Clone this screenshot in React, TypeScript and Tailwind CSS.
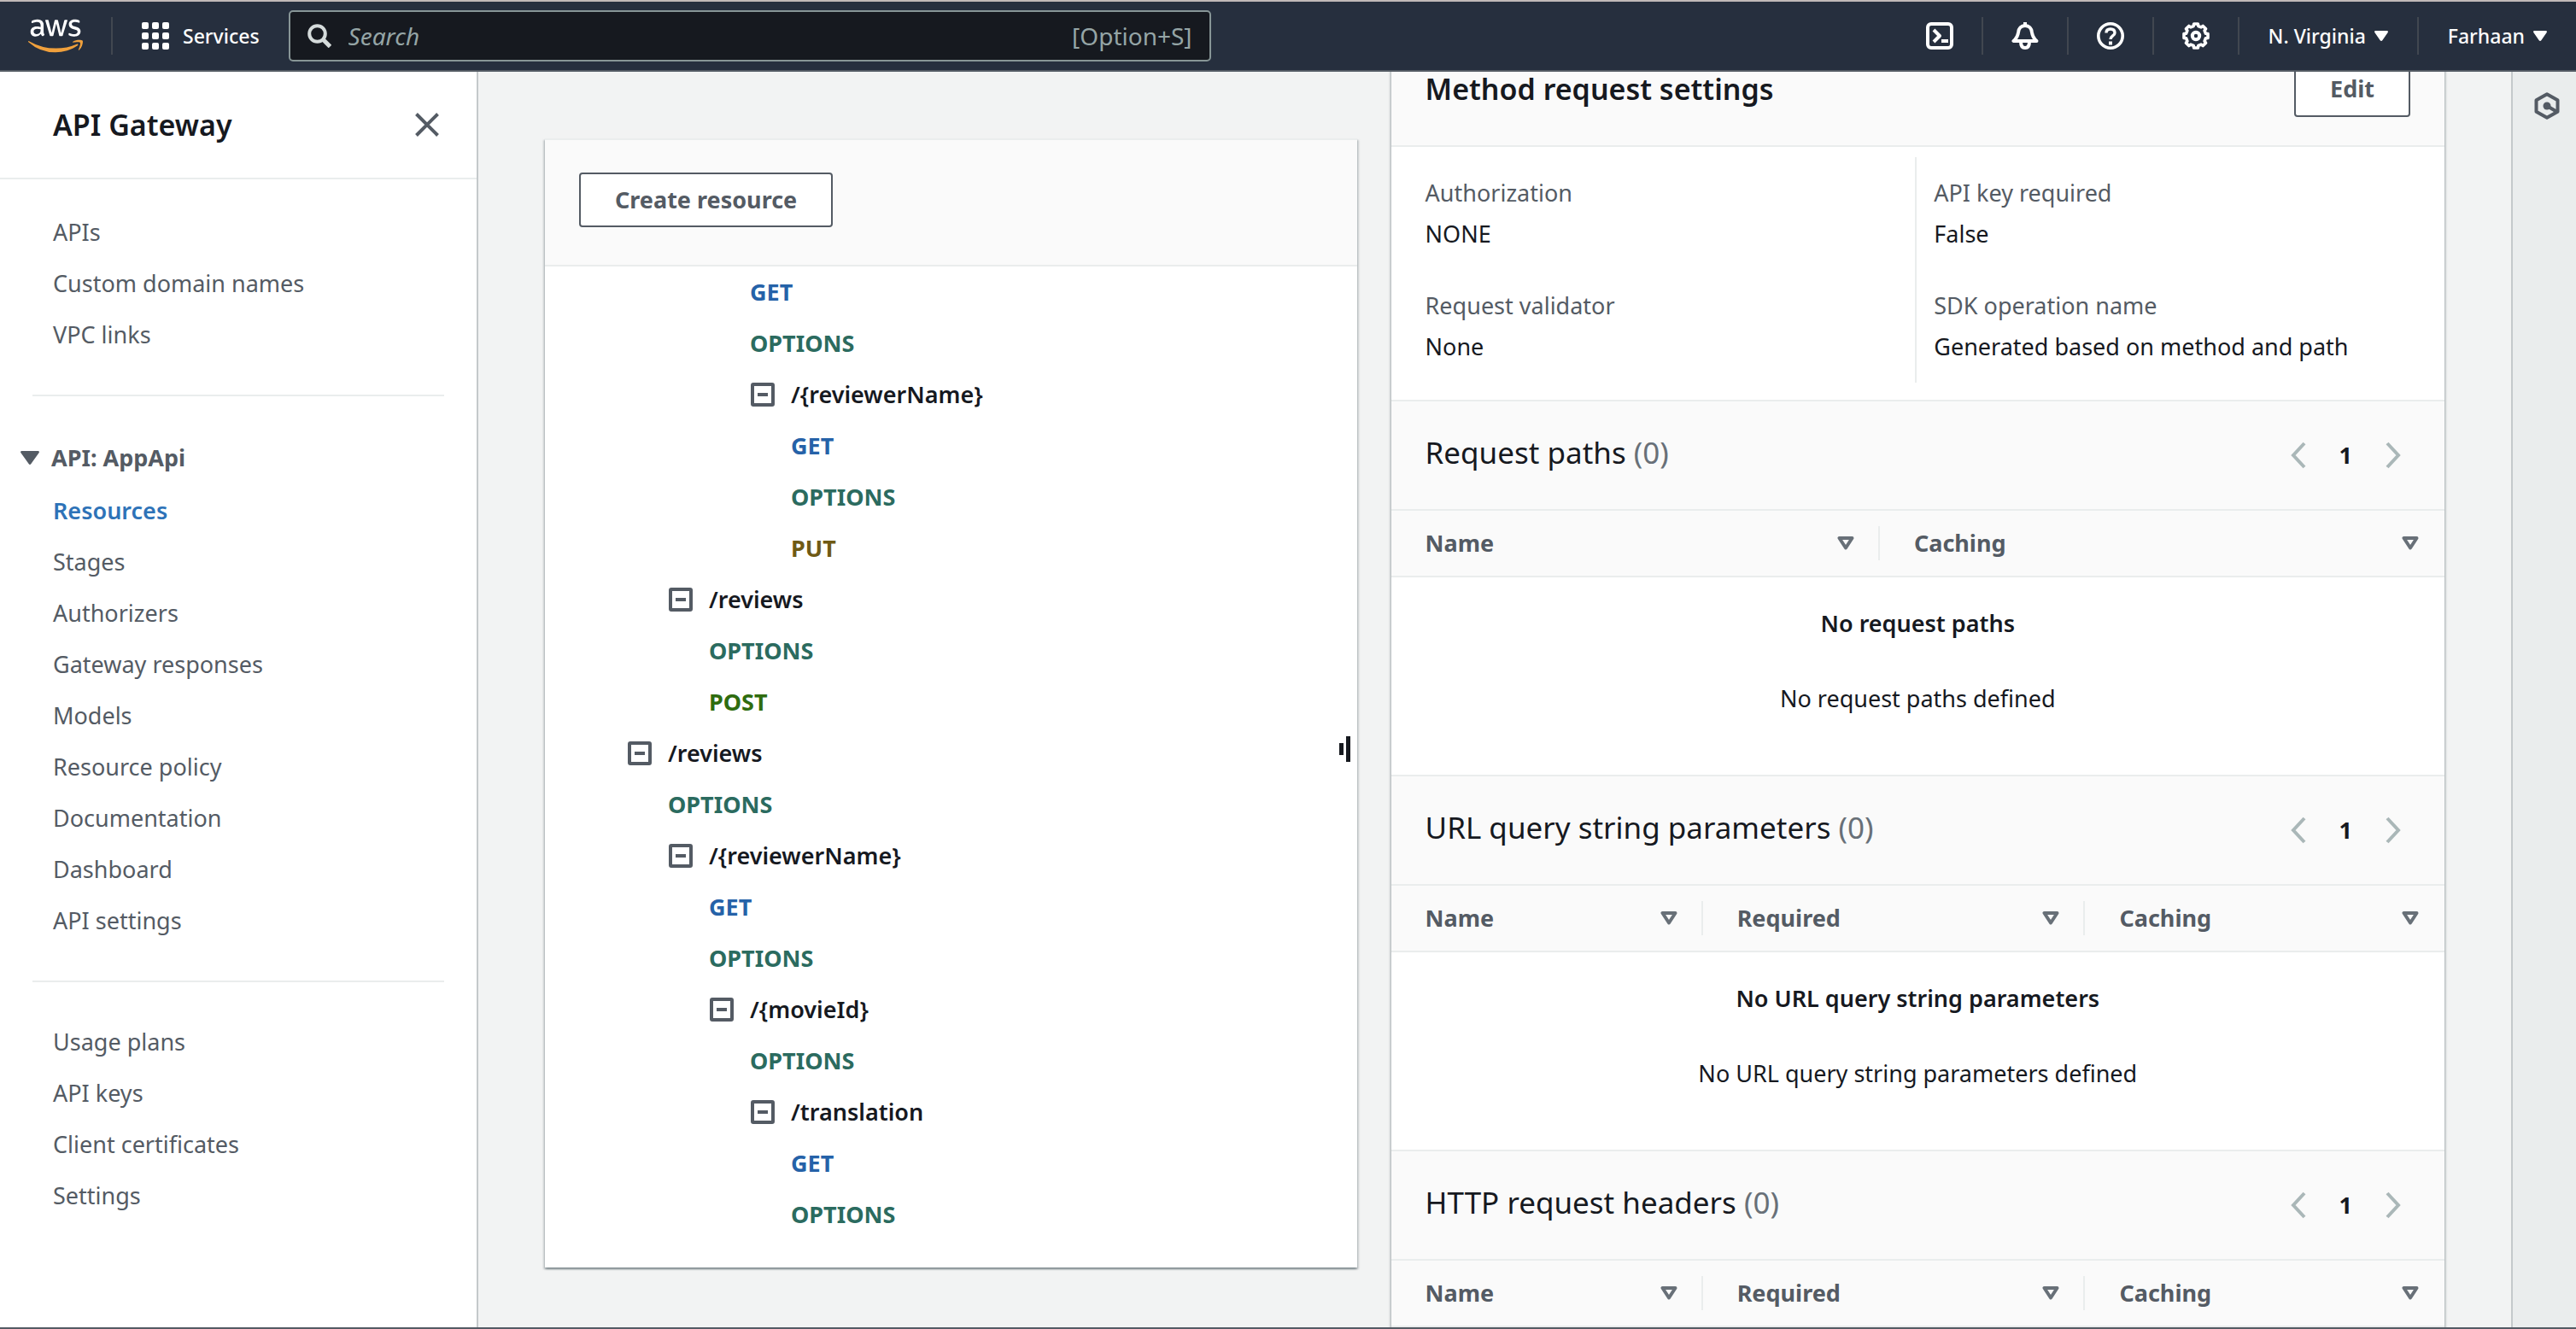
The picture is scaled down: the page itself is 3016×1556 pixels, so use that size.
import type { ReactNode } from "react";
import { FaAws } from "react-icons/fa";

const Divider = () => <span className="h-11 w-0.5 shrink-0 bg-[#414750]" />;

function AwsLogo() {
  return (
    <a href="#home" aria-label="AWS" className="relative block h-[52px] w-16 shrink-0">
      <FaAws className="h-full w-full text-white [clip-path:inset(0_0_42%_0)]" />
      <FaAws className="absolute inset-0 h-full w-full text-[#f0a03c] [clip-path:inset(58%_0_0_0)]" />
    </a>
  );
}

function GridIcon() {
  const steps = [0, 12, 24];
  return (
    <svg viewBox="0 0 32 32" className="size-8" fill="currentColor">
      {steps.map((y) => steps.map((x) => <rect key={`${x}-${y}`} x={x} y={y} width="8" height="8" rx="2" />))}
    </svg>
  );
}

function IconButton({ label, children }: { label: string; children: ReactNode }) {
  return (
    <button aria-label={label} className="flex h-full w-[98px] shrink-0 items-center justify-center">
      <svg viewBox="0 0 32 32" className="size-8" fill="none" stroke="currentColor" strokeWidth="4" strokeLinejoin="round">
        {children}
      </svg>
    </button>
  );
}

function GearShape() {
  const points: string[] = [];
  const teeth = 8;
  for (let i = 0; i < teeth; i++) {
    const base = (i / teeth) * Math.PI * 2 - Math.PI / 2;
    [
      [-0.24, 11.8],
      [-0.17, 14.2],
      [0.17, 14.2],
      [0.24, 11.8],
    ].forEach(([offset, radius]) => {
      points.push(`${(16 + radius * Math.cos(base + offset)).toFixed(2)},${(16 + radius * Math.sin(base + offset)).toFixed(2)}`);
    });
  }
  return <polygon points={points.join(" ")} strokeWidth="3.6" />;
}

function MenuButton({ label }: { label: string }) {
  return (
    <button className="flex h-full shrink-0 items-center gap-2.5 px-[34px] text-[23px] font-medium">
      {label}
      <svg viewBox="0 0 16 12" className="h-3 w-4" fill="currentColor">
        <path d="M1.4 0h13.2c1.1 0 1.7 1 1.1 1.9L9.300 11.300c-.6.9-2 .9-2.600 0L.3 1.900C-.3 1 .3 0 1.400 0z" />
      </svg>
    </button>
  );
}

function TopBar() {
  return (
    <header className="relative z-10 flex h-[84px] shrink-0 items-center border-t-2 border-b-2 border-t-[#c0b9b7] border-b-[#545b64] bg-[#262f3e] pl-[33px] text-white">
      <AwsLogo />
      <div className="flex items-center pl-[33px]">
        <Divider />
      </div>
      <button className="ml-[34px] flex items-center gap-4 text-[23px] font-medium">
        <GridIcon />
        Services
      </button>
      <label className="ml-[34px] flex h-[60px] w-[1080px] min-w-0 items-center rounded-[5px] border-2 border-[#879596] bg-[#16191f] px-5">
        <svg viewBox="0 0 28 28" className="size-7 shrink-0" fill="none" stroke="#d5dbdb" strokeWidth="4">
          <circle cx="11.500" cy="11.500" r="9.300" />
          <path d="M18 18l8.500 8.500" strokeWidth="5" />
        </svg>
        <input
          aria-label="Search"
          placeholder="Search"
          className="ml-5 min-w-0 flex-1 bg-transparent text-[28px] outline-none placeholder:text-[#95a5a6] placeholder:italic"
        />
        <span className="text-[28px] text-[#95a5a6]">[Option+S]</span>
      </label>
      <nav className="ml-auto flex h-full items-center">
        <IconButton label="CloudShell">
          <rect x="2" y="2" width="28" height="28" rx="4" />
          <path d="M9 9l7 7-7 7" />
          <path d="M18 22h8" />
        </IconButton>
        <Divider />
        <IconButton label="Notifications">
          <path d="M16 0v4" />
          <path d="M2.500 22h27c-4-3.500-5-6-5.500-10C23.500 7 20.500 4 16 4s-7.500 3-8 8c-.5 4-1.500 6.500-5.500 10z" />
          <path d="M11 23c0 4.500 2 7 5 7s5-2.500 5-7" />
        </IconButton>
        <Divider />
        <IconButton label="Help">
          <circle cx="16" cy="16" r="14.200" strokeWidth="3.600" />
          <path d="M11 12.500C11 9.500 13 8 16 8s5 1.700 5 4.500c0 3.500-5 3.500-5 7.500" strokeWidth="3.400" />
          <path d="M16 22.500v4" />
        </IconButton>
        <Divider />
        <IconButton label="Settings">
          <GearShape />
          <circle cx="16" cy="16" r="4.200" />
        </IconButton>
        <Divider />
        <MenuButton label="N. Virginia" />
        <Divider />
        <MenuButton label="Farhaan" />
      </nav>
    </header>
  );
}

function NavList({ items, active }: { items: string[]; active?: string }) {
  return (
    <ul>
      {items.map((item) => (
        <li key={item}>
          <a
            href="#nav"
            className={
              item === active
                ? "flex h-[60px] items-center font-semibold text-[#2e73b8]"
                : "flex h-[60px] items-center text-[#545b64]"
            }
          >
            {item}
          </a>
        </li>
      ))}
    </ul>
  );
}

function Sidebar() {
  return (
    <aside className="z-[1] flex w-[560px] shrink-0 flex-col border-r-2 border-[#c4c9cb] bg-white">
      <div className="flex h-[126px] shrink-0 items-center justify-between border-b-2 border-[#eaeded] pr-11 pl-[62px]">
        <h2 className="text-[34px] font-semibold">API Gateway</h2>
        <button aria-label="Close">
          <svg viewBox="0 0 28 28" className="size-7" stroke="#545b64" strokeWidth="4">
            <path d="M1.500 1.500l25 25M26.500 1.500l-25 25" />
          </svg>
        </button>
      </div>
      <nav className="px-[62px] pt-8">
        <NavList items={["APIs", "Custom domain names", "VPC links"]} />
        <hr className="-mx-6 mt-10 mb-[42px] border-t-2 border-[#eaeded]" />
        <button className="-ml-[38px] flex h-[60px] items-center gap-3.5 font-bold text-[#545b64]">
          <svg viewBox="0 0 22 16" className="h-4 w-[22px]" fill="currentColor">
            <path d="M1.500 0h19c1.200 0 1.800 1.200 1.200 2L12.200 15.300c-.6.9-1.800.9-2.400 0L.3 2C-.3 1.200.3 0 1.500 0z" />
          </svg>
          API: AppApi
        </button>
        <div className="pt-0.5">
          <NavList
            active="Resources"
            items={[
              "Resources",
              "Stages",
              "Authorizers",
              "Gateway responses",
              "Models",
              "Resource policy",
              "Documentation",
              "Dashboard",
              "API settings",
            ]}
          />
        </div>
        <hr className="-mx-6 my-10 border-t-2 border-[#eaeded]" />
        <NavList items={["Usage plans", "API keys", "Client certificates", "Settings"]} />
      </nav>
    </aside>
  );
}

type Node = { name: string; children: (Node | string)[] };

const tree: (Node | string)[] = [
  {
    name: "/reviews",
    children: [
      "OPTIONS",
      {
        name: "/{reviewerName}",
        children: [
          "GET",
          "OPTIONS",
          {
            name: "/{movieId}",
            children: ["OPTIONS", { name: "/translation", children: ["GET", "OPTIONS"] }],
          },
        ],
      },
    ],
  },
];

const upperTree: (Node | string)[] = ["GET", "OPTIONS", { name: "/{reviewerName}", children: ["GET", "OPTIONS", "PUT"] }];

const methodClass: Record<string, string> = {
  GET: "font-bold text-[#2562a8]",
  OPTIONS: "font-bold text-[#2b6b5f]",
  PUT: "font-bold text-[#6f5a14]",
  POST: "font-bold text-[#2f6c0f]",
};

function Tree({ nodes }: { nodes: (Node | string)[] }) {
  return (
    <ul>
      {nodes.map((node, index) =>
        typeof node === "string" ? (
          <li key={index} className="flex h-[60px] items-center">
            <a href="#method" className={methodClass[node]}>
              {node}
            </a>
          </li>
        ) : (
          <li key={index}>
            <div className="flex h-[60px] items-center">
              <button aria-label={`Collapse ${node.name}`} className="w-12">
                <svg viewBox="0 0 30 30" className="size-[30px]" fill="none" stroke="#545b64" strokeWidth="4">
                  <rect x="3" y="3" width="24" height="24" rx="1" />
                  <path d="M9 15h12" />
                </svg>
              </button>
              <a href="#resource">{node.name}</a>
            </div>
            <div className="pl-12">
              <Tree nodes={node.children} />
            </div>
          </li>
        ),
      )}
    </ul>
  );
}

const cardShadow =
  "shadow-[0_2px_2px_0_rgba(0,28,36,0.3),2px_2px_2px_0_rgba(0,28,36,0.15),-2px_2px_2px_0_rgba(0,28,36,0.15)]";

function ResourcesCard() {
  return (
    <section className={`relative self-start border-t-2 border-[#eaeded] bg-white ${cardShadow}`}>
      <div className="border-b-2 border-[#eaeded] bg-[#fafafa] px-10 pt-[38px] pb-11">
        <button className="h-16 rounded-[4px] border-2 border-[#545b64] bg-white px-10 font-bold text-[#545b64]">
          Create resource
        </button>
      </div>
      <div className="pr-10 pb-8 pl-24 font-semibold">
        <div className="pl-36">
          <Tree nodes={upperTree} />
        </div>
        <div className="pl-12">
          <Tree nodes={[{ name: "/reviews", children: ["OPTIONS", "POST"] }]} />
        </div>
        <Tree nodes={tree} />
      </div>
      <div className="pointer-events-none absolute inset-y-0 right-2 flex items-center gap-[3px] pt-[106px]">
        <span className="h-3.5 w-[5px] bg-[#16191f]" />
        <span className="h-[30px] w-[5px] bg-[#16191f]" />
      </div>
    </section>
  );
}

function Field({ label, value }: { label: string; value: string }) {
  return (
    <div>
      <dt className="h-12 leading-[48px] text-[#545b64]">{label}</dt>
      <dd className="h-12 leading-[48px]">{value}</dd>
    </div>
  );
}

function Chevron({ path, label }: { path: string; label: string }) {
  return (
    <button aria-label={label}>
      <svg viewBox="0 0 20 32" className="h-8 w-5" fill="none" stroke="#aab7b8" strokeWidth="4">
        <path d={path} />
      </svg>
    </button>
  );
}

type SectionProps = { title: string; columns: string[]; widths: string[]; empty?: string };

function TableSection({ title, columns, widths, empty }: SectionProps) {
  return (
    <section className="border-t-2 border-[#eaeded]">
      <div className="flex h-[126px] items-center justify-between bg-[#fafafa] pr-[50px] pl-10">
        <h3 className="pb-1.5 text-[35px]">
          {title} <span className="text-[#687078]">(0)</span>
        </h3>
        <div className="flex items-center gap-[38px]">
          <Chevron label="Previous page" path="M17 2L4 16l13 14" />
          <span className="font-bold">1</span>
          <Chevron label="Next page" path="M3 2l13 14L3 30" />
        </div>
      </div>
      <table className="w-full table-fixed border-collapse">
        <thead>
          <tr className="h-[78px] border-y-2 border-[#eaeded] bg-[#fafafa] text-[#545b64]">
            {columns.map((column, index) => (
              <th key={column} className={`${widths[index]} p-0 text-left`}>
                <div
                  className={
                    index < columns.length - 1
                      ? "flex h-10 items-center justify-between border-r-2 border-[#eaeded] pr-7 pl-10"
                      : "flex h-10 items-center justify-between pr-[30px] pl-10"
                  }
                >
                  {column}
                  <svg viewBox="0 0 20 16" className="h-4 w-5" fill="none" stroke="#687078" strokeWidth="4" strokeLinejoin="round">
                    <path d="M2.500 2h15L10 13.500z" />
                  </svg>
                </div>
              </th>
            ))}
          </tr>
        </thead>
        <tbody>
          <tr>
            <td colSpan={columns.length} className="h-[232px] px-10 pt-8 text-center align-top">
              <p className="h-11 leading-[44px] font-semibold">No {empty ?? title}</p>
              <p className="mt-11 h-11 leading-[44px]">No {empty ?? title} defined</p>
            </td>
          </tr>
        </tbody>
      </table>
    </section>
  );
}

const threeColumns = ["Name", "Required", "Caching"];
const threeWidths = ["w-[29.600%]", "w-[36.300%]", "w-[34.100%]"];

function DetailsCard() {
  return (
    <section className={`-mt-[124px] self-start bg-white ${cardShadow}`}>
      <div className="flex h-[134px] items-center justify-between border-b-2 border-[#eaeded] bg-[#fafafa] px-10">
        <h2 className="text-[34px] font-semibold">Method request settings</h2>
        <button className="h-[66px] rounded-[4px] border-2 border-[#545b64] bg-white px-10 font-bold text-[#545b64]">
          Edit
        </button>
      </div>
      <dl className="grid grid-cols-[614fr_620fr] pt-3 pb-5">
        <div className="flex h-[264px] flex-col gap-9 pt-[18px] pl-10">
          <Field label="Authorization" value="NONE" />
          <Field label="Request validator" value="None" />
        </div>
        <div className="flex h-[264px] flex-col gap-9 border-l-2 border-[#eaeded] pt-[18px] pl-5">
          <Field label="API key required" value="False" />
          <Field label="SDK operation name" value="Generated based on method and path" />
        </div>
      </dl>
      <TableSection
        title="Request paths"
        empty="request paths"
        columns={["Name", "Caching"]}
        widths={["w-[46.400%]", "w-[53.600%]"]}
      />
      <TableSection title="URL query string parameters" columns={threeColumns} widths={threeWidths} />
      <TableSection title="HTTP request headers" columns={threeColumns} widths={threeWidths} />
    </section>
  );
}

export default function App() {
  return (
    <div className="flex h-screen flex-col overflow-hidden border-b-2 border-[#545b64] bg-[#f2f3f3] font-['Noto_Sans',sans-serif] text-[27px] leading-9 text-[#16191f]">
      <TopBar />
      <div className="flex min-h-0 flex-1 overflow-hidden">
        <Sidebar />
        <main className="grid min-w-0 flex-1 grid-cols-[951fr_1234fr] gap-10 px-[78px] pt-[78px]">
          <ResourcesCard />
          <DetailsCard />
        </main>
        <aside className="flex w-[76px] shrink-0 flex-col items-center border-l-2 border-[#c4c9cb] bg-[#eaeded] pt-6 pl-1.5">
          <button aria-label="Hexagon tools">
            <svg viewBox="0 0 30 32" className="h-8 w-[30px]" fill="none" stroke="#545b64" strokeWidth="4">
              <path d="M15 2.300l12.500 7v13.400L15 29.700 2.500 22.700V9.300z" strokeLinejoin="round" />
              <circle cx="15" cy="16" r="4.500" fill="#545b64" stroke="none" />
              <path d="M15 16l11 6.500" />
            </svg>
          </button>
        </aside>
      </div>
    </div>
  );
}
